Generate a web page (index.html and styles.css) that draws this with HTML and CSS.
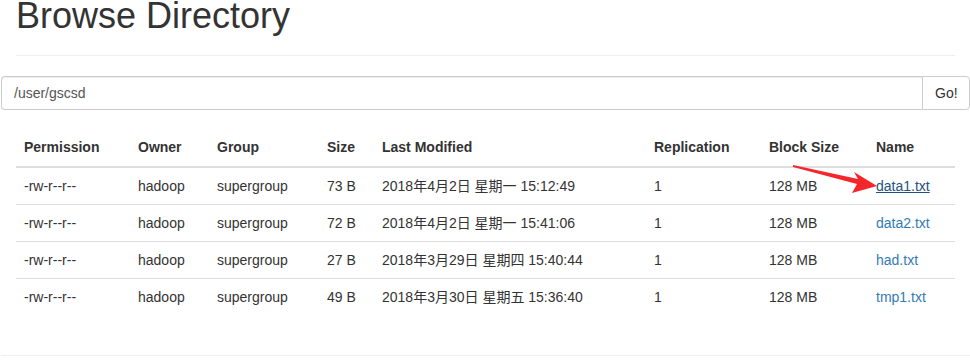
FILE: index.html
```html
<!DOCTYPE html>
<html lang="en">
<head>
  <meta charset="UTF-8">
  <title>Browsing HDFS</title>
  <link rel="stylesheet" href="styles.css">
</head>
<body>

  <div class="page">
    <div class="page-header">
      <h1>Browse Directory</h1>
    </div>

    <div class="input-group">
      <input class="path-input" type="text" value="/user/gscsd">
      <button class="go-btn">Go!</button>
    </div>

    <table class="table">
      <thead>
        <tr>
          <th class="c-perm">Permission</th>
          <th class="c-owner">Owner</th>
          <th class="c-group">Group</th>
          <th class="c-size">Size</th>
          <th class="c-mod">Last Modified</th>
          <th class="c-repl">Replication</th>
          <th class="c-block">Block Size</th>
          <th class="c-name">Name</th>
        </tr>
      </thead>
      <tbody>
        <tr>
          <td>-rw-r--r--</td>
          <td>hadoop</td>
          <td>supergroup</td>
          <td>73 B</td>
          <td>2018年4月2日 星期一 15:12:49</td>
          <td>1</td>
          <td>128 MB</td>
          <td><a href="#" class="active">data1.txt</a></td>
        </tr>
        <tr>
          <td>-rw-r--r--</td>
          <td>hadoop</td>
          <td>supergroup</td>
          <td>72 B</td>
          <td>2018年4月2日 星期一 15:41:06</td>
          <td>1</td>
          <td>128 MB</td>
          <td><a href="#">data2.txt</a></td>
        </tr>
        <tr>
          <td>-rw-r--r--</td>
          <td>hadoop</td>
          <td>supergroup</td>
          <td>27 B</td>
          <td>2018年3月29日 星期四 15:40:44</td>
          <td>1</td>
          <td>128 MB</td>
          <td><a href="#">had.txt</a></td>
        </tr>
        <tr>
          <td>-rw-r--r--</td>
          <td>hadoop</td>
          <td>supergroup</td>
          <td>49 B</td>
          <td>2018年3月30日 星期五 15:36:40</td>
          <td>1</td>
          <td>128 MB</td>
          <td><a href="#">tmp1.txt</a></td>
        </tr>
      </tbody>
    </table>

    <hr class="footer-line">
  </div>

  <svg class="arrow" width="970" height="361" viewBox="0 0 970 361">
    <polygon points="793,165 858,179 854,172 877,186 852,193 857,184 793,167" fill="#f5262b"/>
  </svg>

</body>
</html>
```

FILE: styles.css
```css
body {
  margin: 0;
  background: #fff;
  color: #333;
  font-family: "Liberation Sans", Arial, "Noto Sans CJK SC", sans-serif;
  font-size: 14px;
  line-height: 20px;
}
.page {
  padding: 0 15px 0 16px;
}
.page-header {
  padding-bottom: 9px;
  border-bottom: 1px solid #eee;
  margin-bottom: 20px;
}
.page-header h1 {
  margin: -4px 0 10px;
  font-size: 36px;
  font-weight: 500;
  line-height: 1.1;
}
.input-group {
  display: flex;
  margin: 0 -15px;
  height: 34px;
}
.path-input {
  flex: 1;
  min-width: 0;
  margin: 0;
  padding: 6px 12px;
  border: 1px solid #ccc;
  border-right: none;
  border-radius: 4px 0 0 4px;
  box-shadow: inset 0 1px 1px rgba(0, 0, 0, 0.075);
  font: inherit;
  color: #555;
  outline: none;
}
.go-btn {
  width: 48px;
  margin: 0;
  padding: 6px 12px;
  border: 1px solid #ccc;
  border-radius: 0 4px 4px 0;
  background: #fff;
  color: #333;
  font: inherit;
  cursor: pointer;
}
.table {
  width: 939px;
  margin: 20px 0;
  border-collapse: collapse;
  border-spacing: 0;
  table-layout: fixed;
}
.table th,
.table td {
  padding: 8px;
  text-align: left;
  vertical-align: top;
  white-space: nowrap;
}
.table th {
  padding-top: 7px;
  padding-bottom: 9px;
  font-weight: bold;
  border-bottom: 2px solid #ddd;
}
.table td {
  border-top: 1px solid #ddd;
}
.c-perm { width: 98px; }
.c-owner { width: 63px; }
.c-group { width: 94px; }
.c-size { width: 39px; }
.c-mod { width: 256px; }
.c-repl { width: 99px; }
.c-block { width: 91px; }
.c-name { width: 71px; }
.table a {
  color: #337ab7;
  text-decoration: none;
}
.table a.active {
  color: #23527c;
  text-decoration: underline;
}
.footer-line {
  margin: 40px -15px 0 -15px;
  border: 0;
  border-top: 1px solid #eee;
}
.arrow {
  position: absolute;
  left: 0;
  top: 0;
  pointer-events: none;
}
```
